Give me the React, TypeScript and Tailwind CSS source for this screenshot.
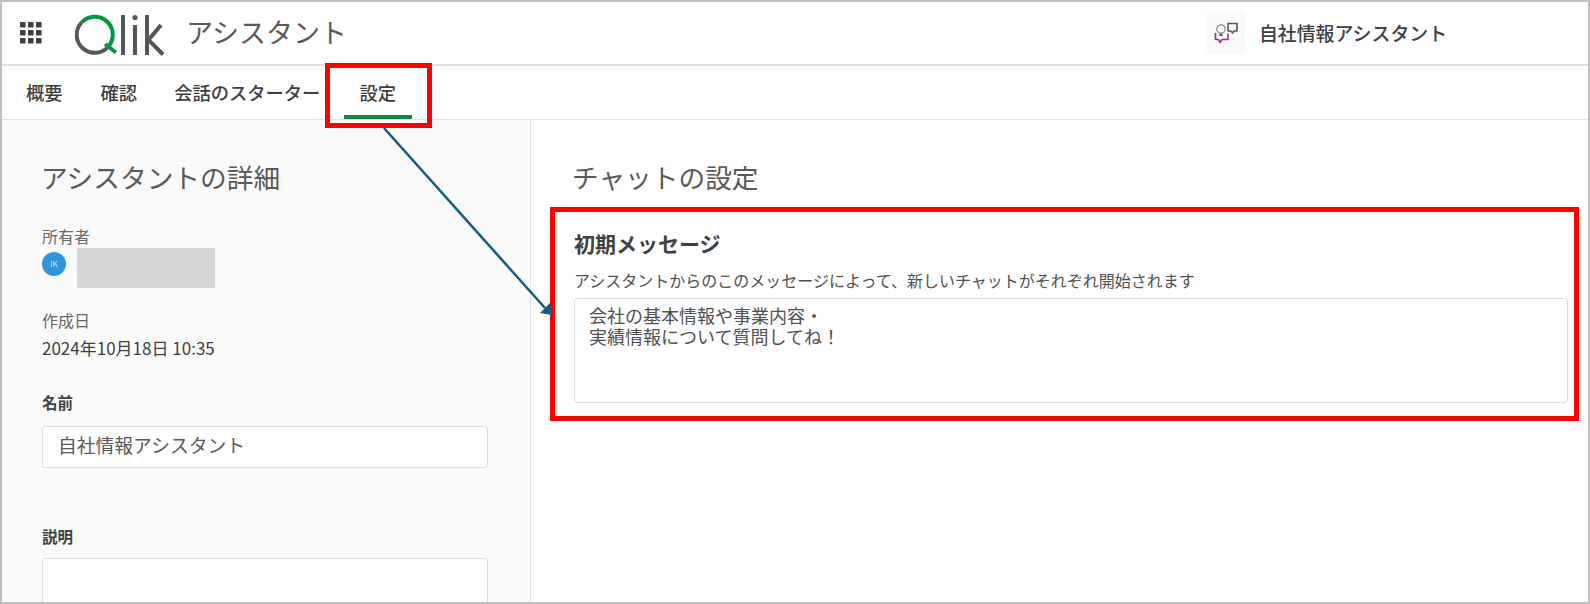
import React from "react";

function Waffle() {
  const cells = [0, 8, 16];
  return (
    <svg width="22" height="22" viewBox="0 0 22 22" className="shrink-0">
      {cells.map((y) =>
        cells.map((x) => <rect key={`${x}-${y}`} x={x} y={y} width="5.6" height="5.6" rx="0.8" fill="#404040" />)
      )}
    </svg>
  );
}

function QlikLogo() {
  return (
    <svg width="90" height="44" viewBox="0 0 90 44" className="shrink-0">
      <path d="M33 35 A18 18 0 0 1 6.5 10.5" fill="none" stroke="#54565a" strokeWidth="4" />
      <path d="M6.5 10.5 A18 18 0 1 1 33 35" fill="none" stroke="#009845" strokeWidth="4" />
      <path d="M30 32 L41 40.5" fill="none" stroke="#009845" strokeWidth="4" />
      <rect x="46" y="3" width="4" height="40" fill="#54565a" />
      <rect x="58" y="13" width="4" height="30" fill="#54565a" />
      <circle cx="60" cy="5.5" r="2.6" fill="#54565a" />
      <rect x="70" y="3" width="4" height="40" fill="#54565a" />
      <path d="M86 13 L73.5 28 L88 42.5" fill="none" stroke="#54565a" strokeWidth="4" />
    </svg>
  );
}

function AssistantIcon() {
  return (
    <div className="flex h-[42px] w-[42px] shrink-0 items-center justify-center rounded-md bg-[#fafafa]">
      <svg width="26" height="24" viewBox="0 0 26 24">
        <path d="M15 2.5 H24 V10 H21 L19.5 12 L18 10 H15 Z" fill="none" stroke="#595959" strokeWidth="1.6" strokeLinejoin="round" />
        <circle cx="8" cy="8" r="4.2" fill="none" stroke="#8c8c8c" strokeWidth="1.3" />
        <path d="M6.5 12.5 H9.5 V15 H6.5 Z" fill="#595959" />
        <path d="M2.5 12 V18.5 H5.5 L7 21.5 L9 18.5 H15 V12.5" fill="none" stroke="#a3258a" strokeWidth="1.6" strokeLinejoin="round" />
      </svg>
    </div>
  );
}

export default function App() {
  return (
    <div className="relative box-border h-[604px] w-[1590px] overflow-hidden border-2 border-[#bfbfbf] bg-white font-['Noto_Sans_CJK_JP',sans-serif] text-[#404040]">
      <header className="flex h-[64px] items-center border-b-2 border-[#e0e0e0] pl-[18px]">
        <Waffle />
        <div className="ml-[33px] mt-[2px]"><QlikLogo /></div>
        <span className="mb-[2px] ml-[21px] text-[27px] leading-9 text-[#595959]">アシスタント</span>
        <div className="ml-[858px] flex items-center gap-3">
          <AssistantIcon />
          <span className="text-[18.9px] font-medium leading-7">自社情報アシスタント</span>
        </div>
      </header>

      <nav className="flex h-[54px] items-stretch border-b border-[#e3e3e3] pl-[24px] text-[18.3px] font-medium">
        <div className="flex items-center">概要</div>
        <div className="ml-[38px] flex items-center">確認</div>
        <div className="ml-[37px] flex items-center">会話のスターター</div>
        <div className="relative ml-[39px] flex items-center">
          設定
          <div className="absolute bottom-0 left-[-15px] h-[4px] w-[68px] bg-[#0a8a3c]" />
        </div>
      </nav>

      <main className="flex h-[484px] overflow-hidden">
        <aside className="box-border w-[529px] shrink-0 overflow-hidden border-r border-[#e3e3e3] bg-[#fafafa] px-[40px]">
          <h2 className="ml-[-1px] mt-[39px] text-[26.7px] font-normal leading-9 text-[#595959]">アシスタントの詳細</h2>
          <div className="mt-[30px] text-[16px] leading-[22px] text-[#666666]">所有者</div>
          <div className="mt-px flex items-start">
            <div className="mt-[4px] flex h-6 w-6 items-center justify-center rounded-full bg-[#2f96de] text-[8px] text-[#cfe6f7]">IK</div>
            <div className="ml-[11px] h-10 w-[138px] bg-[#d6d6d6]" />
          </div>
          <div className="mt-[21px] text-[16px] leading-[22px] text-[#666666]">作成日</div>
          <div className="mt-[6px] text-[17px] leading-[22px]">2024年10月18日 10:35</div>
          <div className="mt-[32px] text-[15.5px] font-bold leading-[22px]">名前</div>
          <div className="mt-[13px] box-border flex h-[42px] w-[446px] items-center rounded-[3px] border border-[#dedede] bg-white pb-[3px] pl-[15px] text-[18.8px] text-[#595959]">自社情報アシスタント</div>
          <div className="mt-[57px] text-[15.5px] font-bold leading-[22px]">説明</div>
          <div className="mt-[11px] box-border h-[80px] w-[446px] rounded-[3px] border border-[#dedede] bg-white" />
        </aside>

        <section className="min-w-0 flex-1 pl-[43px] pr-[20px]">
          <h2 className="ml-[-2px] mt-[39px] text-[26.7px] font-normal leading-9 text-[#595959]">チャットの設定</h2>
          <div className="mt-[34px] text-[21px] font-bold leading-7">初期メッセージ</div>
          <div className="mt-[12px] text-[16px] leading-[22px] text-[#505050]">アシスタントからのこのメッセージによって、新しいチャットがそれぞれ開始されます</div>
          <div className="mt-[7px] box-border h-[105px] whitespace-pre-line rounded-[3px] border border-[#dedede] bg-white pl-[14px] pr-[15px] pt-[6px] text-[18px] leading-[21px] text-[#505050]">
            {"会社の基本情報や事業内容・\n実績情報について質問してね！"}
          </div>
        </section>
      </main>

      {/* annotations laid over the screenshot */}
      <div className="absolute left-[323px] top-[61px] box-border h-[65px] w-[107px] border-[5px] border-[#ff0000]" />
      <div className="absolute left-[548px] top-[205px] box-border h-[214px] w-[1029px] border-[5px] border-[#ff0000]" />
      <svg className="pointer-events-none absolute left-0 top-0" width="1586" height="600" viewBox="0 0 1586 600">
        <path d="M382 126 L543 306" stroke="#156082" strokeWidth="2.6" fill="none" />
        <path d="M550 313 L538 311 L548 301 Z" fill="#156082" />
      </svg>
    </div>
  );
}
